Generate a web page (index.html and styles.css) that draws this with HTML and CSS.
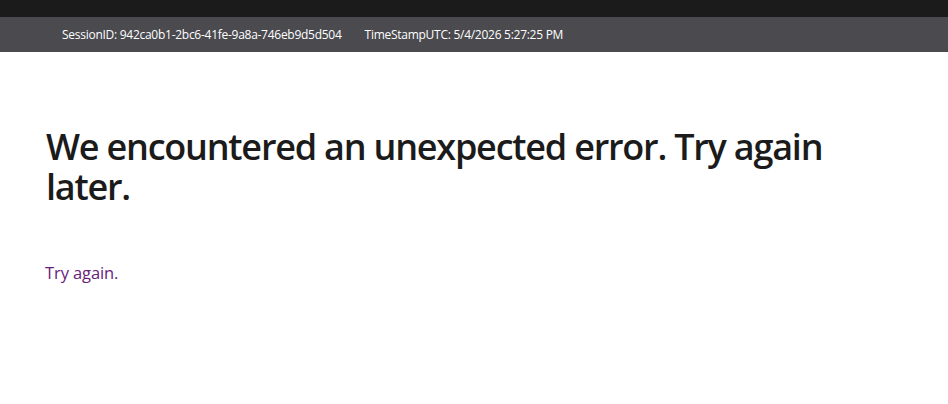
FILE: index.html
```html
<!DOCTYPE html>
<html>
<head>
<meta charset="utf-8">
<link rel="stylesheet" href="styles.css">
</head>
<body>
<div class="topbar"></div>
<div class="infobar">
  <span class="info">SessionID: 942ca0b1-2bc6-41fe-9a8a-746eb9d5d504</span>
  <span class="info">TimeStampUTC: 5/4/2026 5:27:25 PM</span>
</div>
<main class="content">
  <h1 class="title">We encountered an unexpected error. Try again later.</h1>
  <a class="retry" href="#">Try again.</a>
</main>
</body>
</html>
```
FILE: styles.css
```css
html, body {
  margin: 0;
  padding: 0;
  background: #ffffff;
  font-family: "Open Sans", "Noto Sans", sans-serif;
}
.topbar {
  height: 17px;
  background: #1b1b1b;
}
.infobar {
  height: 35px;
  background: #4a4a4f;
  display: flex;
  align-items: center;
  gap: 23px;
  padding-left: 62px;
}
.info {
  color: #ffffff;
  font-size: 12px;
  letter-spacing: -0.27px;
}
.content {
  padding: 75px 46px 0 46px;
}
.title {
  margin: 0;
  font-size: 36px;
  font-weight: 600;
  line-height: 40px;
  color: #1b1b1b;
  max-width: 800px;
  letter-spacing: -1.22px;
}
.retry {
  display: inline-block;
  margin-top: 54px;
  margin-left: -1px;
  font-size: 16.5px;
  color: #68217a;
  text-decoration: none;
  letter-spacing: -0.1px;
}
```
